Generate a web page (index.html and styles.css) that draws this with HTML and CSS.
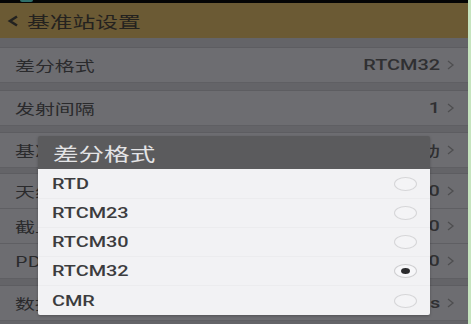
FILE: index.html
```html
<!DOCTYPE html>
<html lang="zh-CN">
<head>
<meta charset="utf-8">
<title>基准站设置</title>
<link rel="stylesheet" href="styles.css">
</head>
<body>
<div class="screen">
  <div class="statusbar"><span class="status-icon"></span></div>
  <div class="appbar">
    <svg class="back" width="12" height="14" viewBox="0 0 12 14"><polyline points="10,2.5 3,7 10,11.5" fill="none" stroke="#232220" stroke-width="2.6" stroke-linejoin="miter"/></svg>
    <span class="sx title-text">基准站设置</span>
  </div>
  <div class="list">
    <div class="group g1">
      <div class="row"><span class="sx label">差分格式</span><span class="value"><span class="sxr">RTCM32</span><svg class="chev" width="9" height="12" viewBox="0 0 9 12"><polyline points="2,2 7,6 2,10" fill="none" stroke="#4e4e50" stroke-width="1.3"/></svg></span></div>
    </div>
    <div class="group g2">
      <div class="row"><span class="sx label">发射间隔</span><span class="value"><span class="sxr">1</span><svg class="chev" width="9" height="12" viewBox="0 0 9 12"><polyline points="2,2 7,6 2,10" fill="none" stroke="#4e4e50" stroke-width="1.3"/></svg></span></div>
    </div>
    <div class="group g3">
      <div class="row"><span class="sx label">基准站启动</span><span class="value"><span class="sxr">自动</span><svg class="chev" width="9" height="12" viewBox="0 0 9 12"><polyline points="2,2 7,6 2,10" fill="none" stroke="#4e4e50" stroke-width="1.3"/></svg></span></div>
    </div>
    <div class="group g4">
      <div class="row"><span class="sx label">天线高度</span><span class="value"><span class="sxr">0.000</span><svg class="chev" width="9" height="12" viewBox="0 0 9 12"><polyline points="2,2 7,6 2,10" fill="none" stroke="#4e4e50" stroke-width="1.3"/></svg></span></div>
      <div class="row"><span class="sx label">截止角</span><span class="value"><span class="sxr">10</span><svg class="chev" width="9" height="12" viewBox="0 0 9 12"><polyline points="2,2 7,6 2,10" fill="none" stroke="#4e4e50" stroke-width="1.3"/></svg></span></div>
      <div class="row"><span class="sx label">PDOP</span><span class="value"><span class="sxr">3.0</span><svg class="chev" width="9" height="12" viewBox="0 0 9 12"><polyline points="2,2 7,6 2,10" fill="none" stroke="#4e4e50" stroke-width="1.3"/></svg></span></div>
    </div>
    <div class="group g5">
      <div class="row"><span class="sx label">数据间隔</span><span class="value"><span class="sxr">1s</span><svg class="chev" width="9" height="12" viewBox="0 0 9 12"><polyline points="2,2 7,6 2,10" fill="none" stroke="#4e4e50" stroke-width="1.3"/></svg></span></div>
    </div>
  </div>
</div>
<div class="edge"></div>

<div class="dialog">
  <div class="dialog-title"><span class="sx">差分格式</span></div>
  <div class="options">
    <div class="option"><span class="sx">RTD</span><span class="radio"></span></div>
    <div class="option"><span class="sx">RTCM23</span><span class="radio"></span></div>
    <div class="option"><span class="sx">RTCM30</span><span class="radio"></span></div>
    <div class="option"><span class="sx">RTCM32</span><span class="radio checked"></span></div>
    <div class="option"><span class="sx">CMR</span><span class="radio"></span></div>
  </div>
</div>
</body>
</html>
```
FILE: styles.css
```css
html, body {
  margin: 0;
  padding: 0;
}
body {
  width: 471px;
  height: 324px;
  overflow: hidden;
  display: flex;
  position: relative;
  background: #646468;
  font-family: "Noto Sans CJK SC", "Noto Sans", sans-serif;
}
.screen {
  width: 468px;
  display: flex;
  flex-direction: column;
}
.edge {
  width: 3px;
  background: #c6e4bf;
}
.sx {
  display: inline-block;
  transform: scaleX(1.42);
  transform-origin: left center;
  white-space: nowrap;
}
.sxr {
  display: inline-block;
  transform: scaleX(1.42);
  transform-origin: right center;
  white-space: nowrap;
  font-family: "Roboto", "Noto Sans CJK SC", sans-serif;
  font-weight: 500;
  font-size: 14px;
  color: #303032;
}
.statusbar {
  height: 3px;
  background: #050505;
  position: relative;
}
.status-icon {
  position: absolute;
  left: 20px;
  top: 0;
  width: 13px;
  height: 2px;
  background: #2f6f6a;
  border-radius: 0 0 3px 3px;
}
.appbar {
  height: 35px;
  background: #6b5a34;
  display: flex;
  align-items: center;
  padding-left: 7px;
  gap: 8px;
}
.title-text {
  font-size: 16px;
  color: #24221f;
  line-height: 1;
}
.list {
  display: flex;
  flex-direction: column;
}
.group {
  border-top: 1px solid #5d5d61;
  background: #6d6d71;
}
.g1 { margin-top: 9px; }
.g2 { margin-top: 7px; }
.g3 { margin-top: 6px; }
.g4 { margin-top: 5px; }
.g5 { margin-top: 6px; }
.row {
  height: 34px;
  border-bottom: 1px solid #5f5f63;
  display: flex;
  align-items: center;
  justify-content: space-between;
  padding: 0 13px 0 15px;
}
.label {
  font-size: 14px;
  color: #2a2a2c;
  line-height: 1;
}
.value {
  display: flex;
  align-items: center;
  gap: 6px;
}
.chev {
  display: block;
}
.dialog {
  position: absolute;
  left: 38px;
  top: 136px;
  width: 392px;
  border-radius: 2px;
  overflow: hidden;
  box-shadow: 0 1px 3px rgba(0,0,0,0.25);
}
.dialog-title {
  height: 33px;
  background: #5b5b5d;
  display: flex;
  align-items: center;
  padding-left: 15px;
  font-size: 18px;
  color: #e4e4e6;
  line-height: 1;
}
.options {
  background: #f2f2f4;
}
.option {
  height: 29px;
  display: flex;
  align-items: center;
  justify-content: space-between;
  padding: 0 13px 0 14px;
  font-family: "Roboto", sans-serif;
  font-weight: 500;
  font-size: 14px;
  color: #3c3c3e;
  border-bottom: 1px solid #ececee;
  box-sizing: border-box;
}
.option:first-child {
  height: 30px;
}
.option:last-child {
  border-bottom: none;
}
.radio {
  width: 23px;
  height: 14px;
  border: 1px solid #d6d6d8;
  border-radius: 50%;
  box-sizing: border-box;
  display: flex;
  align-items: center;
  justify-content: center;
  background: #f4f4f6;
}
.radio.checked {
  border-color: #cfcfd1;
  background: #f7f7f9;
}
.radio.checked::after {
  content: "";
  width: 9px;
  height: 6px;
  border-radius: 50%;
  background: #2c2c2e;
}
```
